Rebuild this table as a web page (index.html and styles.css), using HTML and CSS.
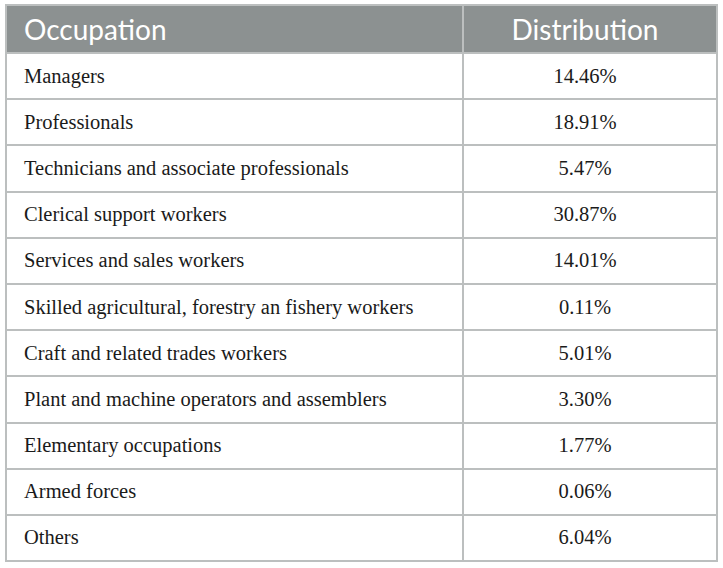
FILE: index.html
```html
<!DOCTYPE html>
<html lang="en">
<head>
  <meta charset="UTF-8" />
  <title>Occupation distribution</title>
  <link rel="stylesheet" href="styles.css">
</head>
<body>
  <table class="dist">
    <thead>
      <tr>
        <th class="occ">Occupation</th>
        <th class="pct">Distribution</th>
      </tr>
    </thead>
    <tbody>
      <tr><td>Managers</td><td class="pct">14.46%</td></tr>
      <tr><td>Professionals</td><td class="pct">18.91%</td></tr>
      <tr><td>Technicians and associate professionals</td><td class="pct">5.47%</td></tr>
      <tr><td>Clerical support workers</td><td class="pct">30.87%</td></tr>
      <tr><td>Services and sales workers</td><td class="pct">14.01%</td></tr>
      <tr><td>Skilled agricultural, forestry an fishery workers</td><td class="pct">0.11%</td></tr>
      <tr><td>Craft and related trades workers</td><td class="pct">5.01%</td></tr>
      <tr><td>Plant and machine operators and assemblers</td><td class="pct">3.30%</td></tr>
      <tr><td>Elementary occupations</td><td class="pct">1.77%</td></tr>
      <tr><td>Armed forces</td><td class="pct">0.06%</td></tr>
      <tr><td>Others</td><td class="pct">6.04%</td></tr>
    </tbody>
  </table>
</body>
</html>
```

FILE: styles.css
```css
body {
  margin: 0;
  padding: 4px 5px;
  background: #fff;
}

.dist {
  width: 713px;
  border-collapse: collapse;
  table-layout: fixed;
  font-family: "Liberation Serif", serif;
  font-size: 20.5px;
  color: #1a1a1a;
}

.dist th,
.dist td {
  border: 2px solid #bcbfbf;
  padding: 0 0 0 17px;
  text-align: left;
}

.dist th {
  height: 46px;
  background-color: #8c9191;
  color: #fff;
  font-family: "Lato", sans-serif;
  font-weight: 400;
  font-size: 28px;
}

.dist th.occ {
  width: 438px;
}

.dist td {
  height: 44.2px;
}

.dist .pct {
  text-align: center;
  padding: 0 10px 0 0;
}
```
